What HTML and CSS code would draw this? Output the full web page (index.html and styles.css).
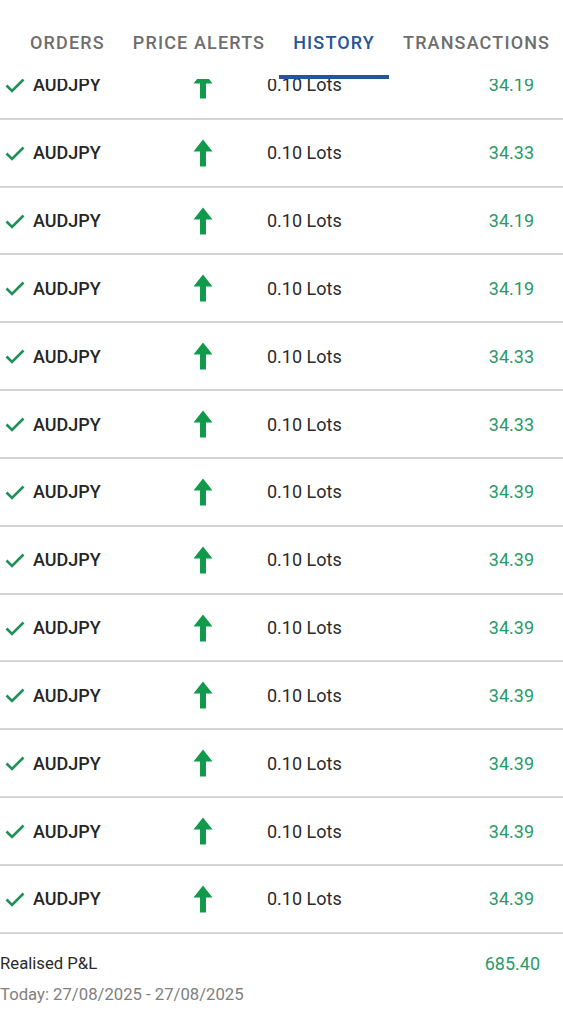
FILE: index.html
```html
<!DOCTYPE html>
<html>
<head>
<meta charset="utf-8">
<link rel="stylesheet" href="styles.css">
</head>
<body>
<div class="screen">
  <nav class="tabs">
    <div class="tab">ORDERS</div>
    <div class="tab">PRICE ALERTS</div>
    <div class="tab active">HISTORY</div>
    <div class="tab">TRANSACTIONS</div>
  </nav>
  <div class="list">
    <div class="rows" id="rows"></div>
  </div>
  <div class="footer">
    <div class="pl-line"><span class="pl-label">Realised P&amp;L</span><span class="pl-value">685.40</span></div>
    <div class="pl-date">Today: 27/08/2025 - 27/08/2025</div>
  </div>
</div>
<template id="row-tpl">
  <div class="row">
    <svg class="check" viewBox="0 0 20 16" width="20" height="16"><path d="M1.5 8.5 L7 14 L18.5 2.5" fill="none" stroke="#1f9158" stroke-width="2.6"/></svg>
    <span class="sym">AUDJPY</span>
    <svg class="arrow" viewBox="0 0 20 28" width="20" height="28"><path d="M10 0.5 L19.5 12.5 L13 12.5 L13 27.5 L7 27.5 L7 12.5 L0.5 12.5 Z" fill="#119a4b"/></svg>
    <span class="lots">0.10 Lots</span>
    <span class="val"></span>
  </div>
</template>
<script>
  var vals = ["34.19","34.33","34.19","34.19","34.33","34.33","34.39","34.39","34.39","34.39","34.39","34.39","34.39"];
  var tpl = document.getElementById('row-tpl');
  var box = document.getElementById('rows');
  vals.forEach(function(v){
    var n = tpl.content.cloneNode(true);
    n.querySelector('.val').textContent = v;
    box.appendChild(n);
  });
</script>
</body>
</html>
```
FILE: styles.css
```css
html, body {
  margin: 0;
  padding: 0;
  background: #ffffff;
}
body {
  font-family: Roboto, "Noto Sans", "Liberation Sans", sans-serif;
  color: #222222;
}
.screen {
  width: 563px;
  height: 1023px;
  overflow: hidden;
  display: flex;
  flex-direction: column;
}
.tabs {
  position: relative;
  z-index: 2;
  background: #ffffff;
  display: flex;
  padding-left: 16px;
  height: 79px;
  flex-shrink: 0;
  white-space: nowrap;
}
.tab {
  box-sizing: border-box;
  height: 79px;
  padding: 30px 14px 0;
  line-height: 26px;
  font-size: 18px;
  font-weight: 500;
  letter-spacing: 1.15px;
  color: #6e6e6e;
  border-bottom: 4px solid transparent;
}
.tab.active {
  color: #26569a;
  border-bottom-color: #26569a;
}
.list {
  margin-top: -27px;
  flex-shrink: 0;
}
.row {
  box-sizing: border-box;
  height: 67.83px;
  border-bottom: 2px solid #d4d4d4;
  display: flex;
  align-items: center;
  padding-left: 5px;
  padding-right: 29px;
  font-size: 18px;
}
.check {
  flex-shrink: 0;
  margin-right: 8px;
}
.sym {
  width: 156px;
  font-weight: 500;
  color: #262626;
}
.arrow {
  flex-shrink: 0;
  margin: 0 4px;
}
.lots {
  margin-left: 50px;
  flex: 1;
  color: #2a2a2a;
}
.val {
  color: #2a9a68;
}
.footer {
  padding-top: 14px;
  padding-right: 23px;
  font-size: 16.7px;
  line-height: 31px;
}
.pl-line {
  display: flex;
  justify-content: space-between;
}
.pl-label {
  color: #2a2a2a;
}
.pl-value {
  color: #2a9a68;
  font-size: 18px;
}
.pl-date {
  color: #808080;
}
```
